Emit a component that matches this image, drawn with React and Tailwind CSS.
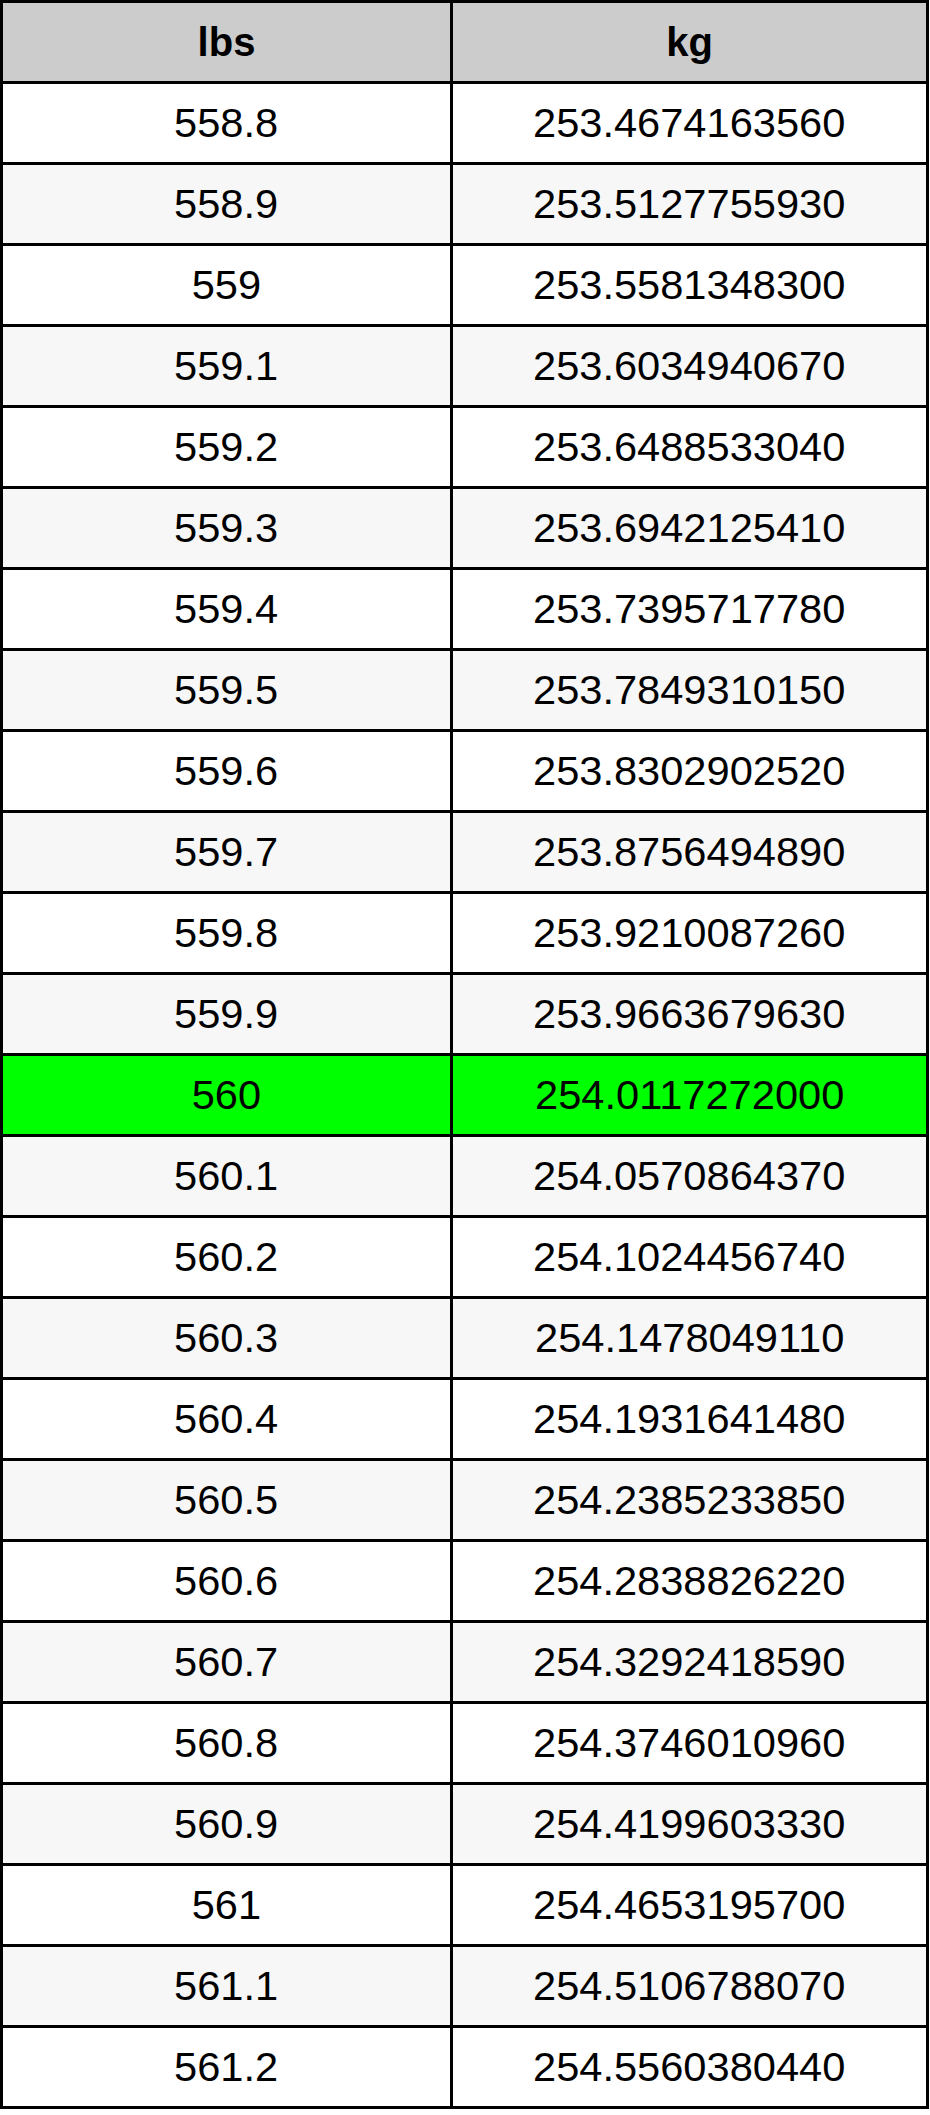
import React from "react";

// lbs -> kg conversion table
const rows = [
  ["558.8", "253.4674163560"],
  ["558.9", "253.5127755930"],
  ["559", "253.5581348300"],
  ["559.1", "253.6034940670"],
  ["559.2", "253.6488533040"],
  ["559.3", "253.6942125410"],
  ["559.4", "253.7395717780"],
  ["559.5", "253.7849310150"],
  ["559.6", "253.8302902520"],
  ["559.7", "253.8756494890"],
  ["559.8", "253.9210087260"],
  ["559.9", "253.9663679630"],
  ["560", "254.0117272000"],
  ["560.1", "254.0570864370"],
  ["560.2", "254.1024456740"],
  ["560.3", "254.1478049110"],
  ["560.4", "254.1931641480"],
  ["560.5", "254.2385233850"],
  ["560.6", "254.2838826220"],
  ["560.7", "254.3292418590"],
  ["560.8", "254.3746010960"],
  ["560.9", "254.4199603330"],
  ["561", "254.4653195700"],
  ["561.1", "254.5106788070"],
  ["561.2", "254.5560380440"],
];

function Cell({ children, wide, bold }) {
  return (
    <div
      className={`h-[81px] border-r-[3px] border-b-[3px] border-black flex items-center justify-center ${
        wide ? "w-[476px]" : "w-[450px]"
      }`}
    >
      <span
        className={`inline-block text-[40px] leading-[46px] text-black ${
          bold ? "font-bold" : "font-normal scale-x-[1.04]"
        }`}
      >
        {children}
      </span>
    </div>
  );
}

export default function App() {
  return (
    <div
      className="w-[930px] h-[2115px] bg-white"
      style={{ fontFamily: '"Liberation Sans", Arial, sans-serif' }}
    >
      <div className="w-[929px] border-l-[3px] border-t-[3px] border-black flex flex-col">
        <div className="flex bg-[#cccccc]">
          <Cell bold>lbs</Cell>
          <Cell wide bold>kg</Cell>
        </div>
        {rows.map((r, i) => (
          <div
            key={r[0]}
            className={`flex ${
              r[0] === "560" ? "bg-[#00ff00]" : i % 2 === 0 ? "bg-white" : "bg-[#f7f7f7]"
            }`}
          >
            <Cell>{r[0]}</Cell>
            <Cell wide>{r[1]}</Cell>
          </div>
        ))}
      </div>
    </div>
  );
}
